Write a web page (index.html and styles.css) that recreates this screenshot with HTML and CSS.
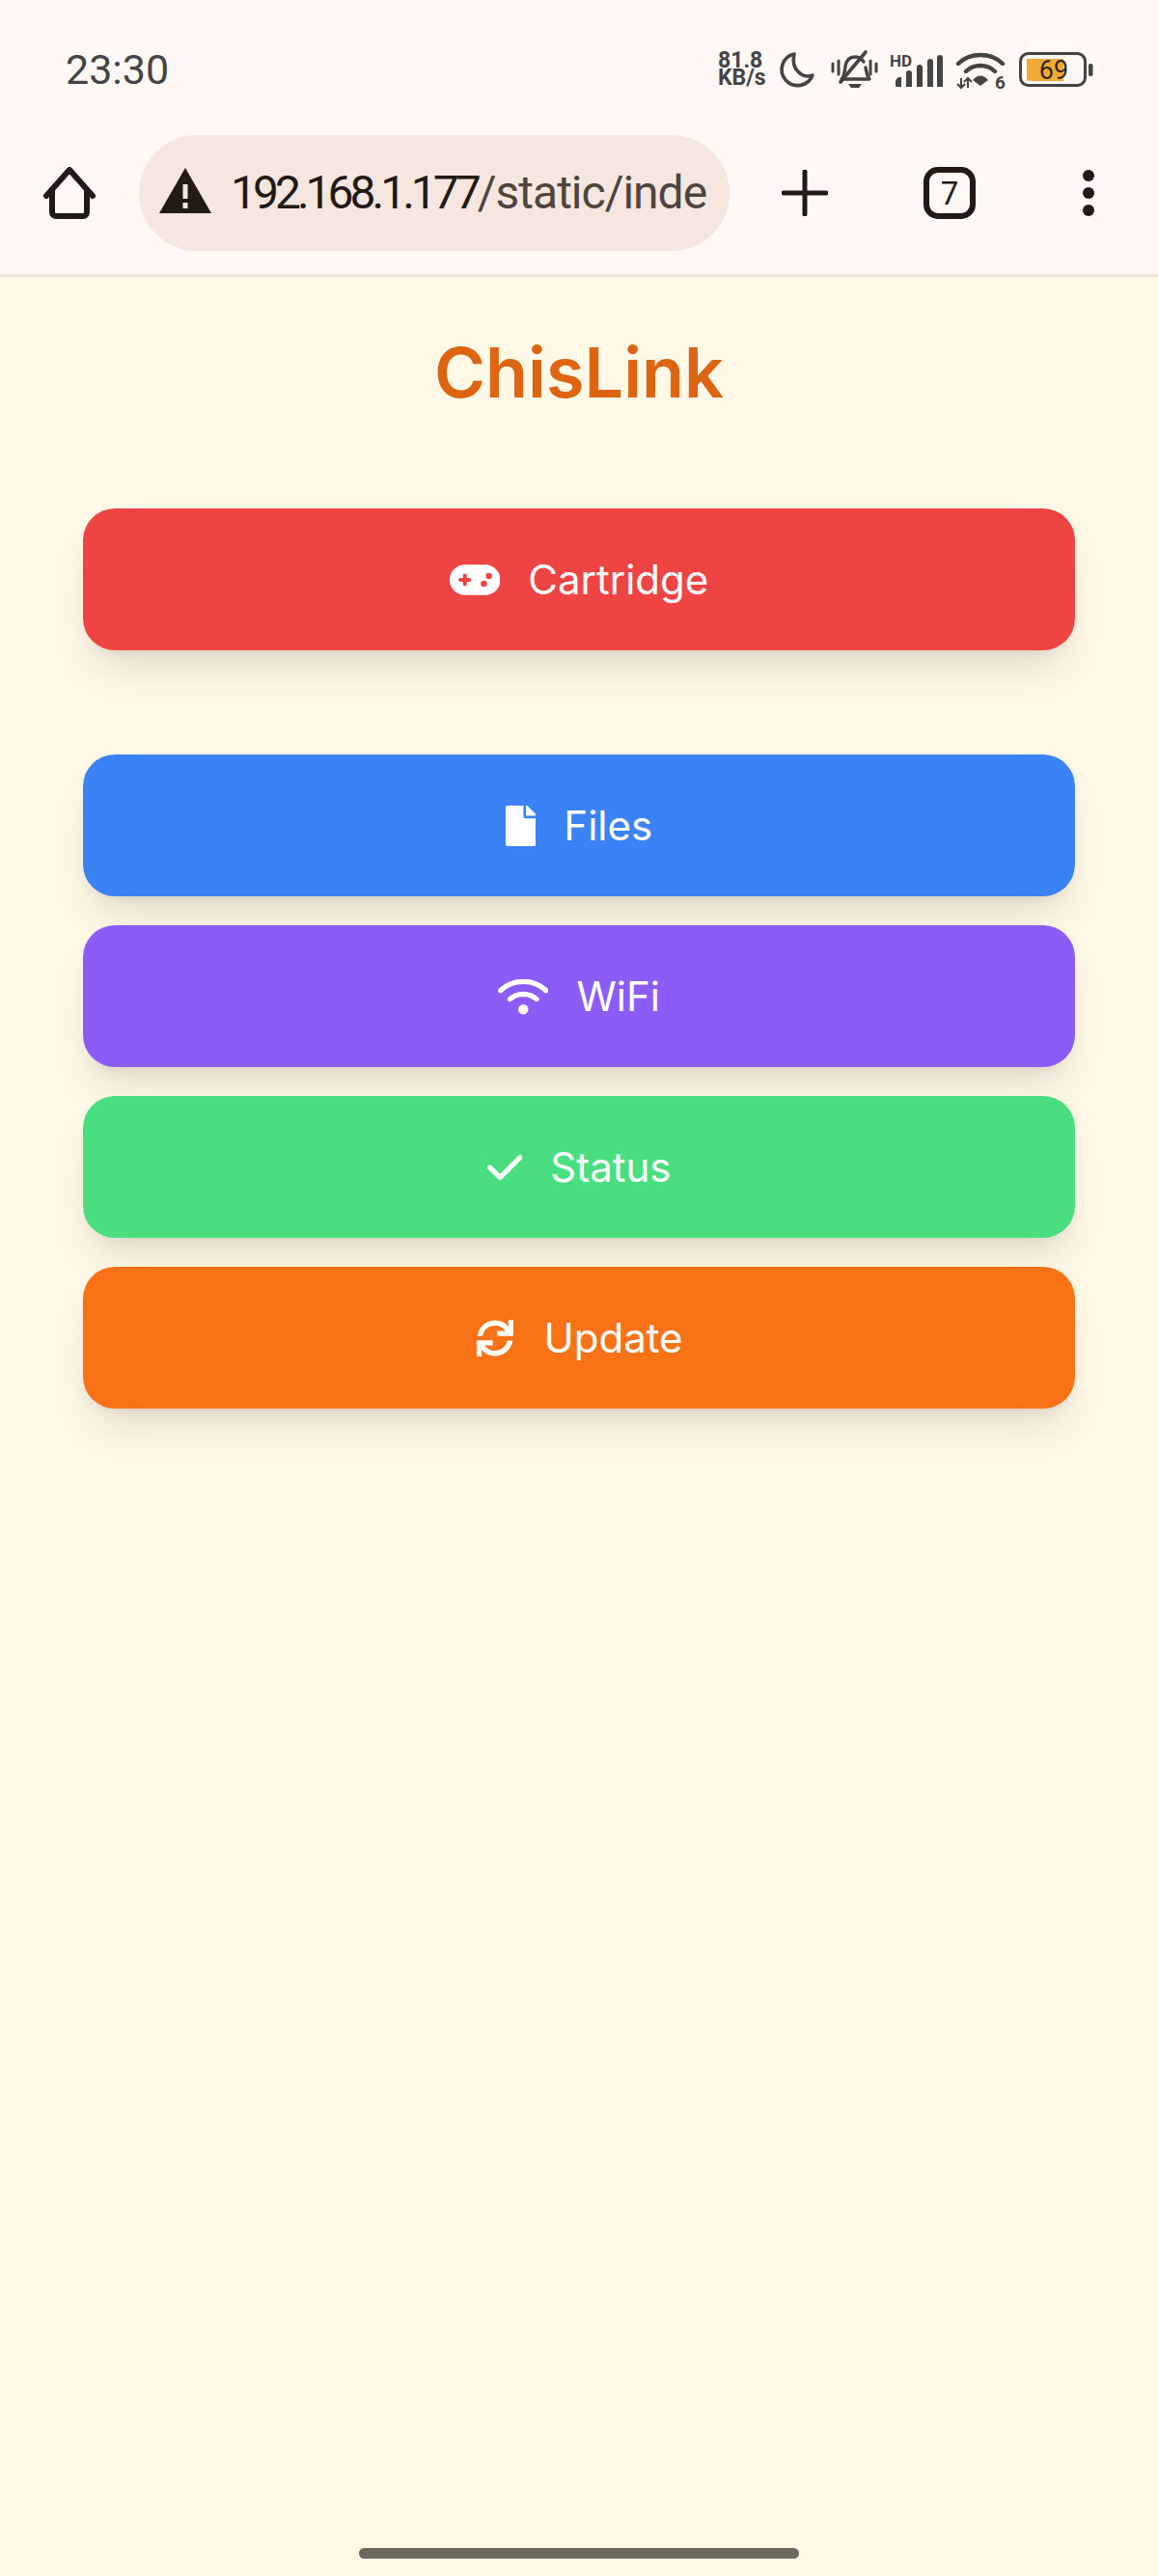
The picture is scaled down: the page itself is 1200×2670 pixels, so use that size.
FILE: index.html
```html
<!DOCTYPE html>
<html lang="en">
<head>
  <meta charset="UTF-8">
  <meta name="viewport" content="width=device-width, initial-scale=1.0">
  <title>ChisLink</title>
  <link rel="stylesheet" href="styles.css">
</head>
<body>

  <!-- Phone + browser chrome -->
  <header class="chrome">
    <div class="status-bar">
      <span class="time">23:30</span>
      <div class="status-icons">
        <div class="net-speed"><span>81.8</span><span>KB/s</span></div>
        <svg class="ic-moon" viewBox="0 0 37 38"><path d="M15 3A16.5 16.5 0 1 0 34 25C24 29 11 19 15 3Z" fill="none" stroke="#444" stroke-width="3.6" stroke-linejoin="round"/></svg>
        <svg class="ic-bell" viewBox="0 0 49 40">
          <path d="M11 30c3-3 3-6 4-13 1-7 5-10 10-10 4 0 7 2 9 5M36 18c1 5 1 8 4 12H11" fill="none" stroke="#444" stroke-width="3.4" stroke-linejoin="round" stroke-linecap="round"/>
          <path d="M10 33 36 2" stroke="#444" stroke-width="3.6" stroke-linecap="round"/>
          <path d="M18 35h14l-3 4h-8Z" fill="#444"/>
          <path d="M2 14v8M8 11v14M41 11v14M47 14v8" stroke="#444" stroke-width="3" stroke-linecap="round"/>
        </svg>
        <div class="signal">
          <span class="hd">HD</span>
          <svg class="ic-bars" viewBox="0 0 49 33"><path d="M0 27a5 5 0 0 1 6-4v10H1a1 1 0 0 1-1-1ZM11 19a3 3 0 0 1 6 0v14h-6ZM22 13a3 3 0 0 1 6 0v20h-6ZM33 7a3 3 0 0 1 6 0v26h-6ZM43 3a3 3 0 0 1 6 0v30h-6Z" fill="#444"/></svg>
        </div>
        <svg class="ic-wifi" viewBox="0 0 52 39">
          <path d="M3 13C15 1 37 1 49 13" fill="none" stroke="#444" stroke-width="4.4" stroke-linecap="round"/>
          <path d="M11 21C19 13 33 13 41 21" fill="none" stroke="#444" stroke-width="4.4" stroke-linecap="round"/>
          <path d="M18 30C23 24 29 24 34 30L26 36Z" fill="#444"/>
          <path d="M6 28v10M2 34l4 4 4-4M13 38V28M9 32l4-4 4 4" fill="none" stroke="#444" stroke-width="2"/>
          <text x="41" y="38.5" class="wifi-six">6</text>
        </svg>
        <svg class="ic-battery" viewBox="0 0 76 37">
          <rect x="1.5" y="1.5" width="67" height="33" rx="8" fill="none" stroke="#444" stroke-width="3"/>
          <path d="M8 7h38v23H11a3 3 0 0 1-3-3Z" fill="#f2aa35"/>
          <rect x="72" y="12" width="4.5" height="13" rx="2" fill="#444"/>
          <text x="36" y="27.500" class="batt-num">69</text>
        </svg>
      </div>
    </div>

    <div class="toolbar">
      <svg class="ic-home" viewBox="0 0 54 54"><path d="M3 30 27 3 51 30M9 25V47a4 4 0 0 0 4 4H41a4 4 0 0 0 4-4V25" fill="none" stroke="#231a15" stroke-width="6" stroke-linecap="round" stroke-linejoin="round"/></svg>
      <div class="url-pill">
        <svg class="ic-warn" viewBox="0 0 54 47"><path d="M27 0 54 47H0Z" fill="#231a15"/><path d="M24.500 17h5v15h-5ZM24.500 36h5v6h-5Z" fill="#f5e6df"/></svg>
        <div class="url"><span class="host">192.168.1.177</span><span class="path">/static/inde</span></div>
      </div>
      <svg class="ic-plus" viewBox="0 0 48 48"><path d="M24 2V46M2 24H46" stroke="#231a15" stroke-width="5" stroke-linecap="round"/></svg>
      <div class="tab-count">7</div>
      <div class="menu-dots"><i></i><i></i><i></i></div>
    </div>
  </header>

  <!-- Page -->
  <main class="page">
    <h1 class="title">ChisLink</h1>

    <a class="btn btn-red btn-first">
      <svg class="fa" viewBox="0 0 640 512"><path d="M192 64C86 64 0 150 0 256S86 448 192 448H448c106 0 192-86 192-192s-86-192-192-192H192zM496 168a40 40 0 1 1 0 80 40 40 0 1 1 0-80zM392 304a40 40 0 1 1 80 0 40 40 0 1 1 -80 0zM168 200c0-13.300 10.700-24 24-24s24 10.700 24 24v32h32c13.300 0 24 10.700 24 24s-10.700 24-24 24H216v32c0 13.300-10.700 24-24 24s-24-10.700-24-24V280H136c-13.300 0-24-10.700-24-24s10.700-24 24-24h32V200z"/></svg>
      Cartridge
    </a>

    <div class="btn-list">
      <a class="btn btn-blue">
        <svg class="fa" viewBox="0 0 384 512"><path d="M224 136V0H24C10.700 0 0 10.700 0 24v464c0 13.300 10.700 24 24 24h336c13.300 0 24-10.700 24-24V160H248c-13.200 0-24-10.800-24-24zm160-14.100v6.100H256V0h6.100c6.400 0 12.500 2.500 17 7l97.900 98c4.500 4.500 7 10.600 7 16.900z"/></svg>
        Files
      </a>
      <a class="btn btn-purple">
        <svg class="fa" viewBox="0 0 640 512"><path d="M54.200 202.900C123.200 136.700 216.800 96 320 96s196.800 40.700 265.800 106.900c12.800 12.200 33 11.800 45.200-.9s11.800-33-.9-45.200C549.700 79.500 440.400 32 320 32S90.300 79.500 9.800 156.700C-2.900 169-3.300 189.200 8.900 202s32.500 13.200 45.200 .9zM320 256c56.800 0 108.600 21.100 148.200 56c13.300 11.700 33.500 10.400 45.200-2.800s10.400-33.500-2.800-45.200C459.800 219.200 393 192 320 192s-139.800 27.200-190.500 72c-13.300 11.700-14.500 31.900-2.800 45.200s31.900 14.500 45.200 2.800c39.500-34.900 91.300-56 148.200-56zm64 160a64 64 0 1 0 -128 0 64 64 0 1 0 128 0z"/></svg>
        WiFi
      </a>
      <a class="btn btn-green">
        <svg class="fa" viewBox="0 0 448 512"><path d="M438.600 105.400c12.500 12.500 12.500 32.800 0 45.300l-256 256c-12.500 12.500-32.800 12.500-45.300 0l-128-128c-12.500-12.500-12.500-32.800 0-45.300s32.800-12.500 45.300 0L160 338.700 393.400 105.400c12.500-12.500 32.800-12.500 45.300 0z"/></svg>
        Status
      </a>
      <a class="btn btn-orange">
        <svg class="fa fa-sync" viewBox="0 0 512 512"><path d="M440.650 12.570l4 82.770A247.160 247.160 0 0 0 255.830 8C134.730 8 33.910 94.920 12.290 209.820A12 12 0 0 0 24.090 224h49.050a12 12 0 0 0 11.670-9.260 175.910 175.910 0 0 1 317-56.940l-101.460-4.860a12 12 0 0 0-12.570 12v47.410a12 12 0 0 0 12 12H500a12 12 0 0 0 12-12V12a12 12 0 0 0-12-12h-47.370a12 12 0 0 0-11.980 12.570zM255.830 432a175.610 175.610 0 0 1-146-77.800l101.800 4.870a12 12 0 0 0 12.570-12v-47.400a12 12 0 0 0-12-12H12a12 12 0 0 0-12 12V500a12 12 0 0 0 12 12h47.350a12 12 0 0 0 12-12.600l-4.150-82.570A247.170 247.170 0 0 0 255.830 504c121.110 0 221.930-86.920 243.550-201.820a12 12 0 0 0-11.800-14.180h-49.050a12 12 0 0 0-11.670 9.260A175.860 175.860 0 0 1 255.830 432z"/></svg>
        Update
      </a>
    </div>
  </main>

  <!-- Gesture bar -->
  <div class="home-bar"></div>

</body>
</html>
```

FILE: styles.css
```css
html, body {
  margin: 0;
  padding: 0;
}
body {
  position: relative;
  width: 1200px;
  height: 2670px;
  overflow: hidden;
  background-color: #fff8e7;
  font-family: Inter, sans-serif;
}

/* Chrome */
.chrome {
  height: 287px;
  box-sizing: border-box;
  background-color: #fff8f5;
  border-bottom: 3px solid #efe5da;
}
.status-bar {
  height: 140px;
  box-sizing: border-box;
  padding: 4px 68px 0 68px;
  display: flex;
  align-items: center;
  justify-content: space-between;
}
.time {
  font-family: Roboto, sans-serif;
  font-size: 43px;
  color: #444;
}
.status-icons {
  display: flex;
  align-items: center;
}
.status-icons svg {
  display: block;
  overflow: visible;
}
.net-speed {
  width: 51px;
  display: flex;
  flex-direction: column;
  font-family: Roboto, sans-serif;
  font-weight: 700;
  font-size: 23px;
  line-height: 18px;
  color: #444;
}
.ic-moon {
  width: 37px;
  height: 38px;
  margin-left: 13px;
}
.ic-bell {
  width: 49px;
  height: 40px;
  margin-left: 16px;
}
.signal {
  position: relative;
  width: 55px;
  height: 35px;
  margin-left: 12px;
}
.hd {
  position: absolute;
  left: 0;
  top: -2px;
  font-family: Roboto, sans-serif;
  font-weight: 700;
  font-size: 17px;
  line-height: 20px;
  color: #444;
}
.ic-bars {
  position: absolute;
  right: 0;
  bottom: 0;
  width: 49px;
  height: 33px;
}
.ic-wifi {
  width: 52px;
  height: 39px;
  margin-left: 13px;
}
.wifi-six {
  font-family: Roboto, sans-serif;
  font-weight: 700;
  font-size: 19px;
  fill: #444;
}
.ic-battery {
  width: 76px;
  height: 37px;
  margin-left: 14px;
}
.batt-num {
  font-family: Roboto, sans-serif;
  font-size: 27px;
  fill: #33291c;
  text-anchor: middle;
}

.toolbar {
  height: 144px;
  display: flex;
  align-items: flex-start;
}
.ic-home {
  width: 54px;
  height: 54px;
  margin: 33px 45px 0 45px;
}
.url-pill {
  width: 612px;
  height: 120px;
  box-sizing: border-box;
  padding: 0 20px 0 21px;
  display: flex;
  align-items: center;
  background-color: #f5e6df;
  border-radius: 60px;
}
.ic-warn {
  flex: none;
  width: 54px;
  height: 47px;
  margin-right: 20px;
  margin-top: -6px;
}
.url {
  flex: 1;
  white-space: nowrap;
  font-family: Roboto, sans-serif;
  font-size: 48px;
  line-height: 60px;
}
.host {
  color: #231a15;
  letter-spacing: -4px;
}
.path {
  color: #4f453f;
  letter-spacing: -1px;
}
.ic-plus {
  width: 48px;
  height: 48px;
  margin: 36px 0 0 54px;
}
.tab-count {
  width: 54px;
  height: 54px;
  box-sizing: border-box;
  margin: 33px 0 0 99px;
  display: flex;
  align-items: center;
  justify-content: center;
  border: 6px solid #231a15;
  border-radius: 15px;
  font-family: Roboto, sans-serif;
  font-size: 33px;
  color: #231a15;
}
.menu-dots {
  margin: 36px 0 0 111px;
  display: flex;
  flex-direction: column;
  gap: 6px;
}
.menu-dots i {
  display: block;
  width: 12px;
  height: 12px;
  border-radius: 50%;
  background-color: #231a15;
}

/* Page */
.page {
  padding: 0 86px;
}
.title {
  margin: 0;
  padding-top: 59px;
  text-align: center;
  font-size: 72px;
  line-height: 80px;
  font-weight: 600;
  color: #dd6512;
}
.btn {
  height: 147px;
  display: flex;
  align-items: center;
  justify-content: center;
  gap: 29px;
  border-radius: 33px;
  color: white;
  font-size: 42px;
  box-shadow: 0 27px 41px -8px rgba(0, 0, 0, 0.1), 0 11px 16px -11px rgba(0, 0, 0, 0.1);
}
.btn-first {
  margin-top: 101px;
}
.btn-list {
  margin-top: 108px;
  display: flex;
  flex-direction: column;
  gap: 30px;
}
.fa {
  height: 42px;
  fill: white;
}
.fa-sync {
  height: 38px;
  margin: 0 2px;
}
.btn-red { background-color: #ef4444; }
.btn-blue { background-color: #3b82f6; }
.btn-purple { background-color: #8b5cf6; }
.btn-green { background-color: #4ade80; }
.btn-orange { background-color: #f97316; }

.home-bar {
  position: absolute;
  left: 372px;
  top: 2641px;
  width: 456px;
  height: 11px;
  border-radius: 6px;
  background-color: #6b675d;
}
```
